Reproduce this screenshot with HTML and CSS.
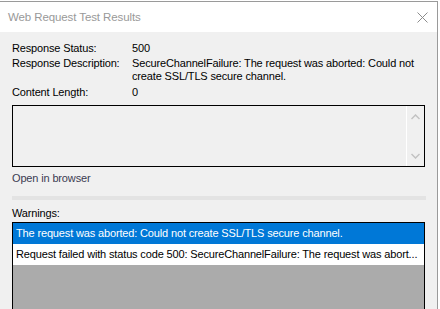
FILE: index.html
```html
<!DOCTYPE html>
<html lang="en">
<head>
    <meta charset="UTF-8">
    <meta name="viewport" content="width=device-width, initial-scale=1.0">
    <title>Web Request Test Results</title>
    <link rel="stylesheet" href="styles.css">
</head>
<body>
    <div class="backdrop"><span class="backdrop-text">Process Variables</span></div>

    <div class="window">
        <div class="titlebar">
            <span class="title">Web Request Test Results</span>
            <svg class="close" width="11" height="11" viewBox="0 0 11 11">
                <path d="M0.5 0.5 L10.5 10.5 M10.5 0.5 L0.5 10.5" stroke="#8c8c8c" stroke-width="1" fill="none"/>
            </svg>
        </div>

        <div class="dialog">
            <div class="info-grid">
                <span class="info-label">Response Status:</span>
                <span>500</span>
                <span class="info-label">Response Description:</span>
                <span>SecureChannelFailure: The request was aborted: Could not create SSL/TLS secure channel.</span>
                <span class="info-label last">Content Length:</span>
                <span class="last">0</span>
            </div>

            <div class="content-box">
                <div class="content-text"></div>
                <div class="scrollbar">
                    <svg width="9" height="6" viewBox="0 0 9 6">
                        <path d="M0.5 5 L4.5 1 L8.5 5" stroke="#c2c2c2" stroke-width="1.5" fill="none"/>
                    </svg>
                    <svg width="9" height="6" viewBox="0 0 9 6">
                        <path d="M0.5 1 L4.5 5 L8.5 1" stroke="#c2c2c2" stroke-width="1.5" fill="none"/>
                    </svg>
                </div>
            </div>

            <div class="open-link">Open in browser</div>

            <div class="separator"></div>

            <div class="section-label">Warnings:</div>

            <div class="warning-list">
                <div class="warning-item selected">The request was aborted: Could not create SSL/TLS secure channel.</div>
                <div class="warning-item">Request failed with status code 500: SecureChannelFailure: The request was abort...</div>
            </div>
        </div>
    </div>
</body>
</html>
```

FILE: styles.css
```css
body {
    margin: 0;
    background-color: #ffffff;
    font-family: "Liberation Sans", Arial, sans-serif;
    font-size: 11px;
    letter-spacing: -0.15px;
    color: #000;
    overflow: hidden;
}
.backdrop {
    height: 1px;
    overflow: hidden;
    padding-left: 55px;
}
.backdrop-text {
    display: block;
    margin-top: -11px;
    font-weight: bold;
    font-size: 12px;
    line-height: 12px;
    color: #000;
}
.window {
    width: 437px;
    height: 320px;
    border-top: 1px solid #9a9a9a;
    border-right: 1px solid #9a9a9a;
    background-color: #f0f0f0;
}
.titlebar {
    height: 30px;
    background-color: #fff;
    display: flex;
    align-items: center;
    justify-content: space-between;
    padding: 0 9px 0 8px;
}
.title {
    font-family: "Liberation Sans", sans-serif;
    font-size: 11.5px;
    letter-spacing: -0.1px;
    color: #999;
}
.close {
    display: block;
}
.dialog {
    padding: 10px 0 0 12px;
}
.info-grid {
    display: grid;
    grid-template-columns: 120px 292px;
    row-gap: 2px;
    line-height: 13px;
}
.info-grid .last {
    margin-top: 1px;
}
.content-box {
    display: flex;
    width: 411px;
    height: 60px;
    margin-top: 6px;
    border: 1px solid #000;
}
.content-text {
    flex: 1;
}
.scrollbar {
    width: 17px;
    border-left: 1px solid #fff;
    display: flex;
    flex-direction: column;
    justify-content: space-between;
    align-items: center;
    padding: 8px 0 7px;
}
.scrollbar svg {
    display: block;
}
.open-link {
    margin-top: 5px;
    line-height: 13px;
    color: #3b3b52;
}
.separator {
    width: 414px;
    height: 4px;
    margin-top: 11px;
    background-color: #e3e3e3;
}
.section-label {
    margin-top: 7px;
    line-height: 13px;
}
.warning-list {
    width: 411px;
    height: 100px;
    margin-top: 2px;
    border: 1px solid #000;
    background-color: #ababab;
}
.warning-item {
    height: 21px;
    line-height: 21px;
    padding-left: 3px;
    background-color: #fff;
    white-space: nowrap;
    overflow: hidden;
}
.warning-item.selected {
    background-color: #0078d7;
    color: #fff;
}
```
